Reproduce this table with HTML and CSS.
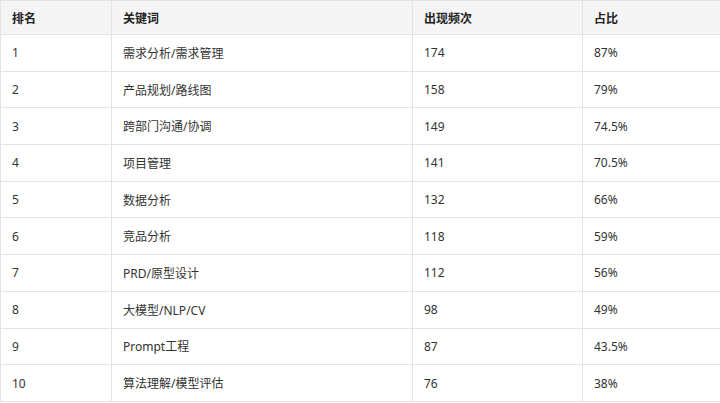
FILE: index.html
```html
<!DOCTYPE html>
<html lang="zh">
<head>
<meta charset="utf-8">
<link rel="stylesheet" href="styles.css">
</head>
<body>
<table class="kw-table">
  <colgroup>
    <col class="c1"><col class="c2"><col class="c3"><col class="c4">
  </colgroup>
  <thead>
    <tr><th>排名</th><th>关键词</th><th>出现频次</th><th>占比</th></tr>
  </thead>
  <tbody>
    <tr><td>1</td><td>需求分析/需求管理</td><td>174</td><td>87%</td></tr>
    <tr><td>2</td><td>产品规划/路线图</td><td>158</td><td>79%</td></tr>
    <tr><td>3</td><td>跨部门沟通/协调</td><td>149</td><td>74.5%</td></tr>
    <tr><td>4</td><td>项目管理</td><td>141</td><td>70.5%</td></tr>
    <tr><td>5</td><td>数据分析</td><td>132</td><td>66%</td></tr>
    <tr><td>6</td><td>竞品分析</td><td>118</td><td>59%</td></tr>
    <tr><td>7</td><td>PRD/原型设计</td><td>112</td><td>56%</td></tr>
    <tr><td>8</td><td>大模型/NLP/CV</td><td>98</td><td>49%</td></tr>
    <tr><td>9</td><td>Prompt工程</td><td>87</td><td>43.5%</td></tr>
    <tr><td>10</td><td>算法理解/模型评估</td><td>76</td><td>38%</td></tr>
  </tbody>
</table>
</body>
</html>
```
FILE: styles.css
```css
html, body {
  margin: 0;
  padding: 0;
  background: #ffffff;
}
.kw-table {
  border-collapse: collapse;
  table-layout: fixed;
  width: 720px;
  font-family: "Noto Sans", "Noto Sans CJK SC", sans-serif;
  font-size: 12px;
  color: #333333;
}
.c1 { width: 111px; }
.c2 { width: 301px; }
.c3 { width: 170px; }
.c4 { width: 138px; }
.kw-table th,
.kw-table td {
  border: 1px solid #e3e3e3;
  padding: 0 11px;
  text-align: left;
  vertical-align: middle;
  white-space: nowrap;
}
.kw-table th {
  background: #f5f5f5;
  font-weight: 700;
  height: 33px;
  color: #222222;
}
.kw-table td {
  height: 35.7px;
}
```
